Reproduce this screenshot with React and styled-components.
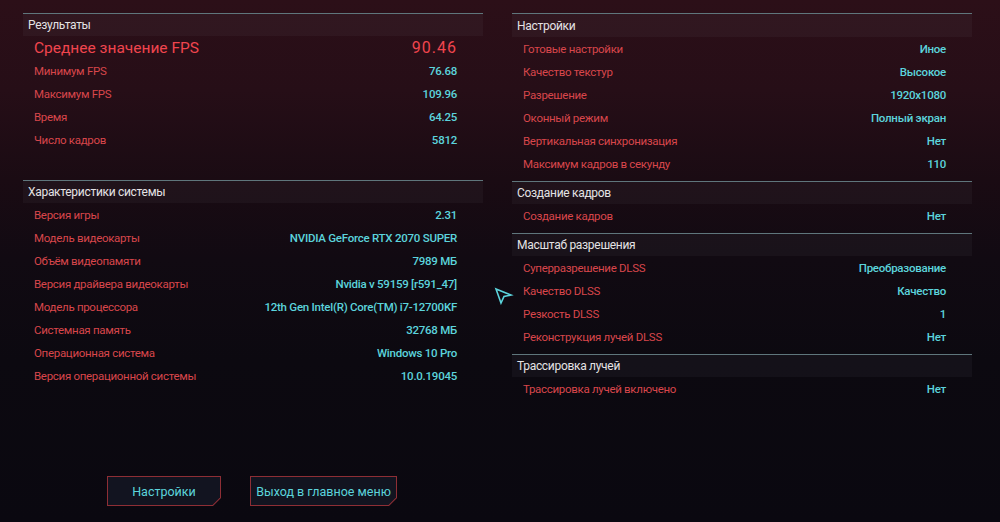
import React from 'react'
import styled, { createGlobalStyle } from 'styled-components'

const GlobalStyle = createGlobalStyle`
  html, body {
    margin: 0;
    padding: 0;
    background: #0a0810;
  }
  body {
    font-family: Roboto, "Liberation Sans", sans-serif;
  }
`

const Screen = styled.div`
  position: relative;
  width: 1000px;
  height: 522px;
  overflow: hidden;
  display: flex;
  flex-direction: column;
  background: linear-gradient(180deg, #2c0f18 0px, #260e17 90px, #1a0b13 180px, #110a12 260px, #0c0910 360px, #0a0810 522px);
`

const Columns = styled.div`
  display: flex;
  gap: 29px;
  padding: 13px 0 0 23px;
`

const Column = styled.div`
  width: 460px;
  display: flex;
  flex-direction: column;
  gap: ${p => p.$gap}px;
`

const Section = styled.div`
  border-top: 1px solid #5f767c;
  display: flex;
  flex-direction: column;
`

const Header = styled.div`
  height: ${p => p.$h || 22}px;
  display: flex;
  align-items: center;
  padding-left: 5px;
  background: rgba(150, 150, 170, 0.06);
  color: #e4e2e4;
  font-size: 12px;
  letter-spacing: -0.3px;
`

const Row = styled.div`
  height: 23px;
  display: flex;
  align-items: center;
  justify-content: space-between;
  padding: 0 26px 0 11px;
  font-size: 11.5px;
`

const BigRow = styled(Row)`
  font-size: 15.5px;
`

const Label = styled.span`
  color: ${p => (p.$big ? '#f0454e' : '#d8464b')};
  letter-spacing: ${p => (p.$big ? '0' : '-0.3px')};
`

const Value = styled.span`
  color: ${p => (p.$big ? '#f0454e' : '#5cd4dc')};
  font-weight: ${p => (p.$big ? 400 : 500)};
  font-size: ${p => (p.$big ? '16px' : '11.5px')};
  letter-spacing: ${p => (p.$big ? '1px' : '-0.25px')};
`

const Footer = styled.div`
  margin-top: auto;
  display: flex;
  gap: 29px;
  padding: 0 0 16px 107px;
`

const ButtonFrame = styled.div`
  width: ${p => p.$w}px;
  height: 30px;
  padding: 1px;
  box-sizing: border-box;
  background: #8e2e35;
  clip-path: polygon(0 0, 100% 0, 100% calc(100% - 8px), calc(100% - 8px) 100%, 0 100%);
`

const ButtonFace = styled.div`
  width: 100%;
  height: 100%;
  display: flex;
  align-items: center;
  justify-content: center;
  background: #121420;
  color: #5cd4dc;
  font-size: 12.5px;
  white-space: nowrap;
  clip-path: polygon(0 0, 100% 0, 100% calc(100% - 7.5px), calc(100% - 7.5px) 100%, 0 100%);
`

const Cursor = styled.svg`
  position: absolute;
  left: 494px;
  top: 287px;
`

const results = [
  ['Минимум FPS', '76.68'],
  ['Максимум FPS', '109.96'],
  ['Время', '64.25'],
  ['Число кадров', '5812']
]

const system = [
  ['Версия игры', '2.31'],
  ['Модель видеокарты', 'NVIDIA GeForce RTX 2070 SUPER'],
  ['Объём видеопамяти', '7989 МБ'],
  ['Версия драйвера видеокарты', 'Nvidia v 59159 [r591_47]'],
  ['Модель процессора', '12th Gen Intel(R) Core(TM) i7-12700KF'],
  ['Системная память', '32768 МБ'],
  ['Операционная система', 'Windows 10 Pro'],
  ['Версия операционной системы', '10.0.19045']
]

const settings = [
  ['Готовые настройки', 'Иное'],
  ['Качество текстур', 'Высокое'],
  ['Разрешение', '1920x1080'],
  ['Оконный режим', 'Полный экран'],
  ['Вертикальная синхронизация', 'Нет'],
  ['Максимум кадров в секунду', '110']
]

const rightSections = [
  { title: 'Создание кадров', rows: [['Создание кадров', 'Нет']] },
  {
    title: 'Масштаб разрешения',
    rows: [
      ['Суперразрешение DLSS', 'Преобразование'],
      ['Качество DLSS', 'Качество'],
      ['Резкость DLSS', '1'],
      ['Реконструкция лучей DLSS', 'Нет']
    ]
  },
  { title: 'Трассировка лучей', rows: [['Трассировка лучей включено', 'Нет']] }
]

function Rows ({ rows }) {
  return rows.map(([label, value]) => (
    <Row key={label}>
      <Label>{label}</Label>
      <Value>{value}</Value>
    </Row>
  ))
}

export default function App () {
  return (
    <Screen>
      <GlobalStyle />
      <Columns>
        <Column $gap={29}>
          <Section>
            <Header>Результаты</Header>
            <BigRow>
              <Label $big>Среднее значение FPS</Label>
              <Value $big>90.46</Value>
            </BigRow>
            <Rows rows={results} />
          </Section>
          <Section>
            <Header>Характеристики системы</Header>
            <Rows rows={system} />
          </Section>
        </Column>
        <Column $gap={6}>
          <Section>
            <Header $h={23}>Настройки</Header>
            <Rows rows={settings} />
          </Section>
          {rightSections.map(s => (
            <Section key={s.title}>
              <Header>{s.title}</Header>
              <Rows rows={s.rows} />
            </Section>
          ))}
        </Column>
      </Columns>
      <Footer>
        <ButtonFrame $w={114}><ButtonFace>Настройки</ButtonFace></ButtonFrame>
        <ButtonFrame $w={147}><ButtonFace>Выход в главное меню</ButtonFace></ButtonFrame>
      </Footer>
      <Cursor width='20' height='18' viewBox='0 0 20 18'>
        <path d='M2 2 L17 8 L10 9.5 L7 16 Z' fill='none' stroke='#5cd4dc' strokeWidth='1.6' strokeLinejoin='miter' />
      </Cursor>
    </Screen>
  )
}
